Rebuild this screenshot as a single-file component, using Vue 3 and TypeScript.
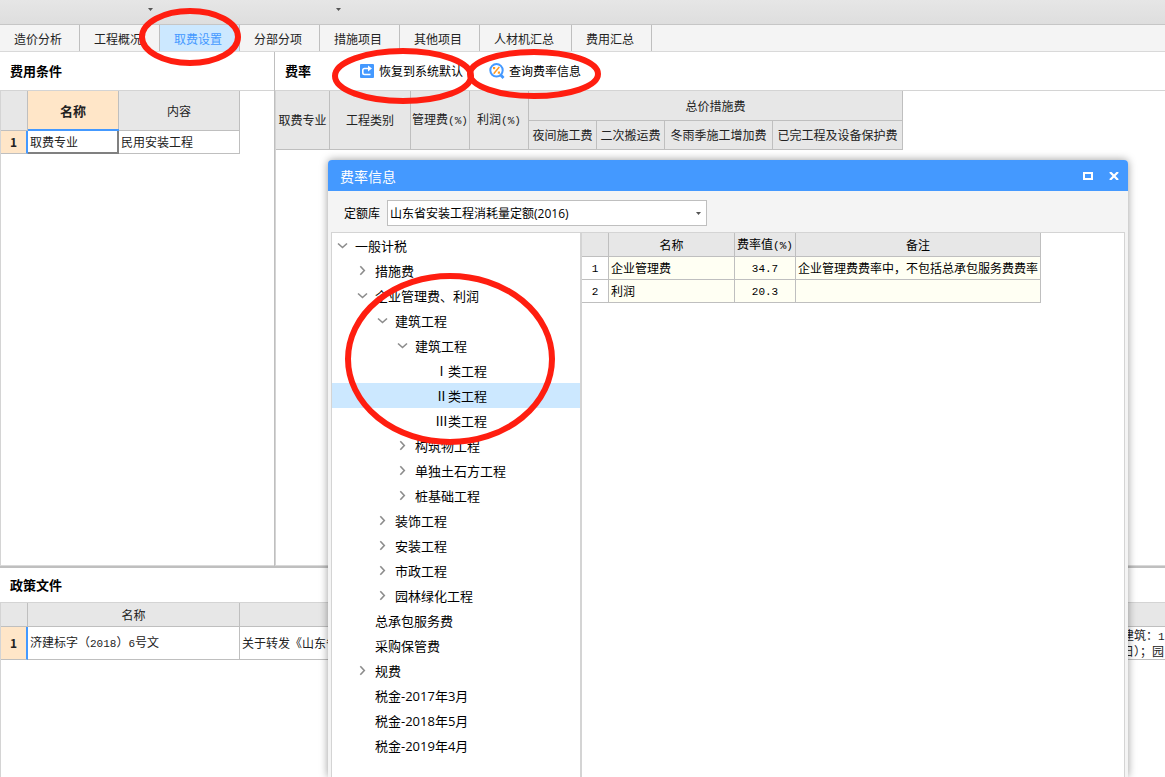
<script setup lang="ts">
import { ref } from 'vue'

interface TreeNode {
  label: string
  level: number
  state: 'open' | 'closed' | 'leaf'
}

interface RateRow {
  name: string
  value: string
  note: string
}

const tabs: string[] = [
  '造价分析', '工程概况', '取费设置', '分部分项',
  '措施项目', '其他项目', '人材机汇总', '费用汇总',
]
const activeTab = ref('取费设置')

const nodes: TreeNode[] = [
  { label: '一般计税', level: 0, state: 'open' },
  { label: '措施费', level: 1, state: 'closed' },
  { label: '企业管理费、利润', level: 1, state: 'open' },
  { label: '建筑工程', level: 2, state: 'open' },
  { label: '建筑工程', level: 3, state: 'open' },
  { label: 'Ⅰ类工程', level: 4, state: 'leaf' },
  { label: 'Ⅱ类工程', level: 4, state: 'leaf' },
  { label: 'Ⅲ类工程', level: 4, state: 'leaf' },
  { label: '构筑物工程', level: 3, state: 'closed' },
  { label: '单独土石方工程', level: 3, state: 'closed' },
  { label: '桩基础工程', level: 3, state: 'closed' },
  { label: '装饰工程', level: 2, state: 'closed' },
  { label: '安装工程', level: 2, state: 'closed' },
  { label: '市政工程', level: 2, state: 'closed' },
  { label: '园林绿化工程', level: 2, state: 'closed' },
  { label: '总承包服务费', level: 1, state: 'leaf' },
  { label: '采购保管费', level: 1, state: 'leaf' },
  { label: '规费', level: 1, state: 'closed' },
  { label: '税金-2017年3月', level: 1, state: 'leaf' },
  { label: '税金-2018年5月', level: 1, state: 'leaf' },
  { label: '税金-2019年4月', level: 1, state: 'leaf' },
]
const selected = ref('Ⅱ类工程')

const rates: RateRow[] = [
  { name: '企业管理费', value: '34.7', note: '企业管理费费率中，不包括总承包服务费费率' },
  { name: '利润', value: '20.3', note: '' },
]

const library = ref('山东省安装工程消耗量定额(2016)')
</script>

<template>
  <div class="app">
    <header class="ribbon">
      <button v-for="n in 2" :key="n" class="ribbon-arrow" type="button" aria-label="展开">
        <svg width="5" height="3" viewBox="0 0 5 3"><path d="M0 0h5L2.500 3z" fill="#555" /></svg>
      </button>
    </header>

    <nav class="tabs">
      <button
        v-for="tab in tabs"
        :key="tab"
        type="button"
        class="tab"
        :class="{ active: tab === activeTab }"
        @click="activeTab = tab"
      >{{ tab }}</button>
    </nav>

    <main class="main">
      <section class="panel conditions">
        <div class="panel-head"><h2>费用条件</h2></div>
        <div class="panel-body">
          <table class="grid">
            <colgroup><col class="c-num" /><col class="c-91" /><col class="c-121" /></colgroup>
            <thead>
              <tr class="h-40"><th></th><th class="current">名称</th><th>内容</th></tr>
            </thead>
            <tbody>
              <tr class="h-23">
                <th class="row-current">1</th>
                <td class="editing">取费专业</td>
                <td>民用安装工程</td>
              </tr>
            </tbody>
          </table>
        </div>
      </section>

      <section class="panel rates">
        <div class="panel-head">
          <h2>费率</h2>
          <button type="button" class="tool restore">
            <svg width="16" height="16" viewBox="0 0 16 16">
              <rect x="1" y="1" width="14" height="14" rx="1" fill="#4499ff" />
              <path d="M10 5.500H5.500Q3.800 5.500 3.800 7.200V9.800Q3.800 11.500 5.500 11.500H11.500" fill="none" stroke="#fff" stroke-width="1.600" />
              <path d="M9 2.500L13 5.500L9 8.500z" fill="#fff" />
            </svg>
            <span>恢复到系统默认</span>
          </button>
          <button type="button" class="tool">
            <svg width="16" height="16" viewBox="0 0 16 16">
              <circle cx="7.500" cy="7.300" r="6.200" fill="#fff" stroke="#4499ff" stroke-width="2" />
              <path d="M11.500 11.800L14.500 15" stroke="#4499ff" stroke-width="2.800" />
              <path d="M10.300 4L4.700 10.700" stroke="#ff9a1f" stroke-width="1.500" />
              <rect x="4" y="4" width="2.200" height="2.200" fill="#ff9a1f" />
              <rect x="8.800" y="8.500" width="2.200" height="2.200" fill="#ff9a1f" />
            </svg>
            <span>查询费率信息</span>
          </button>
        </div>
        <div class="panel-body">
          <table class="grid">
            <colgroup>
              <col class="c-54" /><col class="c-81" /><col class="c-59" /><col class="c-59" />
              <col class="c-68" /><col class="c-68" /><col class="c-108" /><col class="c-130" />
            </colgroup>
            <thead>
              <tr class="h-30">
                <th rowspan="2">取费专业</th>
                <th rowspan="2">工程类别</th>
                <th rowspan="2">管理费<span class="mono">(%)</span></th>
                <th rowspan="2">利润<span class="mono">(%)</span></th>
                <th colspan="4">总价措施费</th>
              </tr>
              <tr class="h-29">
                <th>夜间施工费</th>
                <th>二次搬运费</th>
                <th>冬雨季施工增加费</th>
                <th>已完工程及设备保护费</th>
              </tr>
            </thead>
          </table>
        </div>
      </section>
    </main>

    <section class="policy">
      <div class="policy-head"><h2>政策文件</h2></div>
      <div class="panel-body">
        <table class="grid wide">
          <colgroup><col class="c-num" /><col class="c-212" /><col /><col class="c-45" /></colgroup>
          <thead>
            <tr class="h-24"><th></th><th>名称</th><th></th><th></th></tr>
          </thead>
          <tbody>
            <tr class="h-33">
              <th class="row-current">1</th>
              <td>济建标字（<span class="mono">2018</span>）<span class="mono">6</span>号文</td>
              <td>关于转发《山东省</td>
              <td class="lines">建筑：<span class="mono">1</span><br />日）；园</td>
            </tr>
          </tbody>
        </table>
      </div>
    </section>

    <div class="dialog" role="dialog" aria-labelledby="dialog-title">
      <div class="dialog-title">
        <h1 id="dialog-title">费率信息</h1>
        <button type="button" aria-label="最大化">
          <svg width="10" height="8" viewBox="0 0 10 8"><rect x="1" y="1" width="8" height="6" fill="none" stroke="#fff" stroke-width="2" /></svg>
        </button>
        <button type="button" aria-label="关闭">
          <svg width="10" height="8" viewBox="0 0 10 8"><path d="M1 0L9 8M9 0L1 8" fill="none" stroke="#fff" stroke-width="2.200" /></svg>
        </button>
      </div>

      <div class="dialog-bar">
        <label for="library">定额库</label>
        <div class="select-wrap">
          <select id="library" v-model="library">
            <option>山东省安装工程消耗量定额(2016)</option>
          </select>
          <svg class="caret" width="5" height="3" viewBox="0 0 5 3"><path d="M0 0h5L2.500 3z" fill="#555" /></svg>
        </div>
      </div>

      <div class="dialog-body">
        <ul class="tree" role="tree">
          <li
            v-for="(node, i) in nodes"
            :key="i"
            role="treeitem"
            class="node"
            :class="['level-' + node.level, { selected: node.label === selected }]"
            @click="selected = node.label"
          >
            <span class="twist">
              <svg v-if="node.state === 'open'" width="11" height="11" viewBox="0 0 11 11"><path d="M1 3.500L5.500 7.500L10 3.500" fill="none" stroke="#8c8c8c" stroke-width="1.600" /></svg>
              <svg v-else-if="node.state === 'closed'" width="11" height="11" viewBox="0 0 11 11"><path d="M3.300 1.200L7.300 5.500L3.300 9.800" fill="none" stroke="#8c8c8c" stroke-width="1.600" /></svg>
            </span>
            <span>{{ node.label }}</span>
          </li>
        </ul>
        <div class="result">
          <table class="grid">
            <colgroup><col class="c-num" /><col class="c-126" /><col class="c-61" /><col class="c-245" /></colgroup>
            <thead>
              <tr class="h-24"><th></th><th>名称</th><th>费率值<span class="mono">(%)</span></th><th>备注</th></tr>
            </thead>
            <tbody>
              <tr v-for="(row, i) in rates" :key="row.name" class="h-23">
                <th class="index"><span class="mono">{{ i + 1 }}</span></th>
                <td class="ivory">{{ row.name }}</td>
                <td class="ivory center"><span class="mono">{{ row.value }}</span></td>
                <td class="ivory">{{ row.note }}</td>
              </tr>
            </tbody>
          </table>
        </div>
      </div>
    </div>

    <svg class="marks" aria-hidden="true">
      <g fill="none" stroke="#ff1e10" stroke-width="6">
        <ellipse cx="190" cy="37" rx="48" ry="26" />
        <ellipse cx="403" cy="76" rx="68" ry="25" />
        <ellipse cx="534" cy="74" rx="64" ry="22" />
        <ellipse cx="450" cy="359" rx="102" ry="83" />
      </g>
    </svg>
  </div>
</template>

<style>
body {
  margin: 0;
  background: #fff;
}
</style>

<style scoped>
* {
  box-sizing: border-box;
}

.app {
  position: relative;
  display: flex;
  flex-direction: column;
  height: 100vh;
  overflow: hidden;
  background: #fff;
  color: #222;
  font-family: "Open Sans", "Noto Sans CJK SC", sans-serif;
  font-size: 12px;
  line-height: 16px;
}

button,
select {
  margin: 0;
  padding: 0;
  border: 0;
  background: none;
  color: inherit;
  font: inherit;
}

svg {
  display: block;
}

h1,
h2 {
  margin: 0;
}

h2 {
  color: #000;
  font-size: 13px;
  font-weight: 700;
}

.mono {
  font-family: "Liberation Mono", monospace;
  font-size: 11px;
}

.ribbon {
  display: flex;
  flex: none;
  gap: 183px;
  height: 25px;
  padding: 8px 0 0 148px;
  border-bottom: 1px solid #c6c6c6;
  background: linear-gradient(#e6e6e6, #dedede);
}

.ribbon-arrow {
  width: 5px;
  height: 3px;
}

.tabs {
  display: flex;
  flex: none;
  height: 27px;
  border-bottom: 1px solid #d9d9d9;
  background: #f4f4f4;
}

.tab {
  padding: 4px 17px 0 14px;
  border-right: 1px solid #bfbfbf;
}

.tab.active {
  background: #cce8ff;
  color: #4499ff;
}

.main {
  display: flex;
  flex: 1;
  min-height: 0;
  border-bottom: 2px solid #bfbfbf;
}

.conditions {
  flex: none;
  width: 274px;
}

.rates {
  flex: 1;
  min-width: 0;
  border-left: 1px solid #bfbfbf;
}

.panel {
  display: flex;
  flex-direction: column;
}

.panel-head {
  display: flex;
  flex: none;
  align-items: center;
  height: 39px;
  padding-left: 10px;
  border-bottom: 1px solid #d4d4d4;
}

.panel-body {
  flex: 1;
  border-left: 1px solid #d4d4d4;
}

.panel .panel-body {
  border-bottom: 1px solid #d9d9d9;
}

.tool {
  display: flex;
  align-items: center;
  gap: 4px;
  margin-right: 26px;
  color: #000;
}

.tool span {
  padding-top: 2px;
}

.restore {
  margin-left: 48px;
}

.grid {
  width: 0;
  border-spacing: 0;
  table-layout: fixed;
  font-family: "Noto Sans CJK SC", sans-serif;
}

.grid.wide {
  width: 100%;
}

.grid th,
.grid td {
  overflow: hidden;
  padding: 0 2px;
  border-right: 1px solid #bfbfbf;
  border-bottom: 1px solid #bfbfbf;
  white-space: nowrap;
}

.grid th {
  padding: 0;
  background: #e7e7e7;
  font-weight: 400;
  text-align: center;
}

.grid.wide th:last-child,
.grid.wide td:last-child {
  border-right: 0;
}

.grid .current {
  background: #ffe6c8;
  font-size: 13px;
  font-weight: 700;
}

.grid .row-current {
  border-right: 2px solid #4499ff;
  background: #ffe6c8;
  font-weight: 700;
}

.grid .editing {
  border-right: 2px solid #808080;
  border-bottom: 2px solid #808080;
  box-shadow: 0 -2px #4499ff;
}

.grid .index {
  background: #fff;
}

.grid .ivory {
  background: #fffff3;
}

.grid .center {
  text-align: center;
}

.grid .lines {
  line-height: 14px;
}

.c-num { width: 27px; }
.c-45 { width: 45px; }
.c-54 { width: 54px; }
.c-59 { width: 59px; }
.c-61 { width: 61px; }
.c-68 { width: 68px; }
.c-81 { width: 81px; }
.c-91 { width: 91px; }
.c-108 { width: 108px; }
.c-121 { width: 121px; }
.c-126 { width: 126px; }
.c-130 { width: 130px; }
.c-212 { width: 212px; }
.c-245 { width: 245px; }

.h-23 { height: 23px; }
.h-24 { height: 24px; }
.h-29 { height: 29px; }
.h-30 { height: 30px; }
.h-33 { height: 33px; }
.h-40 { height: 40px; }

.policy {
  display: flex;
  flex: 0 0 209px;
  flex-direction: column;
}

.policy-head {
  display: flex;
  align-items: center;
  height: 35px;
  padding-left: 10px;
  border-bottom: 1px solid #d4d4d4;
}

.dialog {
  position: absolute;
  top: 160px;
  right: 37px;
  bottom: 0;
  left: 328px;
  display: flex;
  flex-direction: column;
  border-radius: 4px 4px 0 0;
  background: #f4f4f4;
  box-shadow: 0 0 8px rgba(0, 0, 0, 0.4);
  color: #000;
}

.dialog-title {
  display: flex;
  flex: none;
  align-items: center;
  gap: 16px;
  height: 31px;
  padding: 0 9px 0 12px;
  border-radius: 4px 4px 0 0;
  background: #4499ff;
  color: #fff;
}

.dialog-title h1 {
  flex: 1;
  padding-top: 2px;
  font-size: 14px;
  font-weight: 400;
}

.dialog-bar {
  display: flex;
  flex: none;
  align-items: center;
  gap: 7px;
  height: 41px;
  padding: 3px 16px 0;
}

.dialog-bar label {
  padding-top: 2px;
}

.select-wrap {
  position: relative;
  width: 320px;
}

.select-wrap select {
  display: block;
  width: 100%;
  height: 26px;
  padding: 2px 20px 0 2px;
  border: 1px solid #bfbfbf;
  border-radius: 0;
  background: #fff;
  appearance: none;
}

.caret {
  position: absolute;
  top: 12px;
  right: 6px;
  pointer-events: none;
}

.dialog-body {
  display: flex;
  flex: 1;
  min-height: 0;
  margin: 0 3px;
  border: 1px solid #d4d4d4;
  border-bottom: 0;
  background: #fff;
}

.tree {
  flex: none;
  width: 250px;
  margin: 0;
  padding: 0;
  border-right: 2px solid #d4d4d4;
  font-size: 13px;
  list-style: none;
}

.node {
  display: flex;
  align-items: center;
  gap: 4px;
  height: 25px;
}

.node.selected {
  background: #cce8ff;
}

.twist {
  width: 14px;
  height: 11px;
}

.level-0 { padding-left: 5px; }
.level-1 { padding-left: 25px; }
.level-2 { padding-left: 45px; }
.level-3 { padding-left: 65px; }
.level-4 { padding-left: 85px; }

.result {
  flex: 1;
  min-width: 0;
}

.marks {
  position: absolute;
  top: 0;
  left: 0;
  width: 100%;
  height: 100%;
  pointer-events: none;
}
</style>
